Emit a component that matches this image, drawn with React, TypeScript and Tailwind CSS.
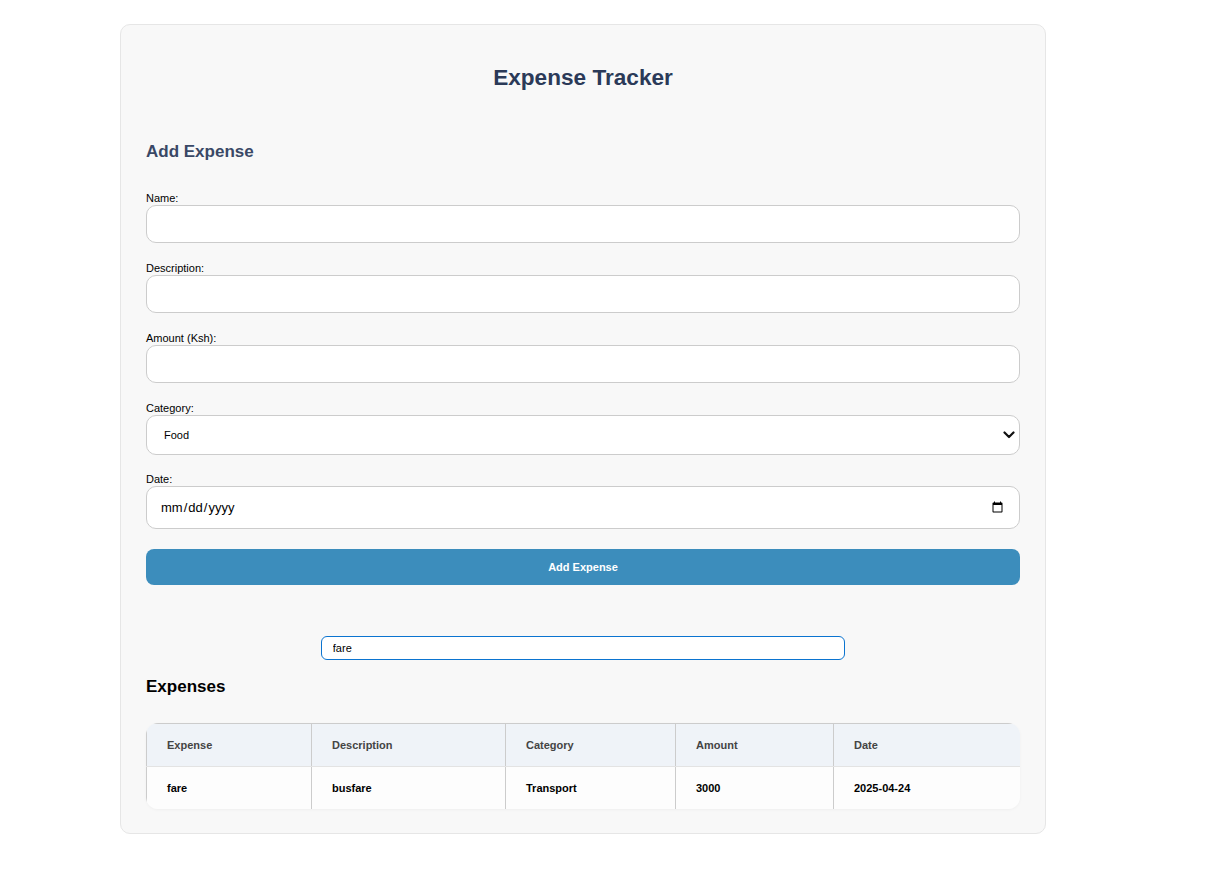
import { useState } from "react";

const expenses = [
  { name: "fare", description: "busfare", category: "Transport", amount: 3000, date: "2025-04-24" },
];

export default function App() {
  const [search, setSearch] = useState("fare");

  const inputClass =
    "block w-full h-[38px] rounded-[10px] border border-[#cccccc] bg-white px-3 text-[13px] outline-none";

  return (
    <div className="min-h-screen bg-white font-['Liberation_Sans',Arial,sans-serif] text-black pt-6 pb-10">
      <div className="ml-[120px] w-[926px] rounded-[10px] border border-[#e6e6e6] bg-[#f8f8f8] p-[25px] pb-[24px]">
        <h1 className="mt-[15px] text-center text-[22.6px] leading-[26px] font-bold text-[#2b3a58]">
          Expense Tracker
        </h1>

        <h2 className="mt-[51px] text-[17px] leading-[20px] font-bold text-[#3a4866]">Add Expense</h2>

        <form className="mt-[30px]" onSubmit={(e) => e.preventDefault()}>
          <label className="block text-[11px] leading-[13px]">Name:</label>
          <input type="text" className={inputClass} />

          <label className="mt-[19px] block text-[11px] leading-[13px]">Description:</label>
          <input type="text" className={inputClass} />

          <label className="mt-[19px] block text-[11px] leading-[13px]">Amount (Ksh):</label>
          <input type="number" className={inputClass} />

          <label className="mt-[19px] block text-[11px] leading-[13px]">Category:</label>
          <div className="relative">
            <select className="block w-full h-[40px] appearance-none rounded-[10px] border border-[#cccccc] bg-white pl-[17px] pr-8 text-[11px] outline-none">
              <option>Food</option>
              <option>Transport</option>
              <option>Entertainment</option>
              <option>Other</option>
            </select>
            <svg
              className="pointer-events-none absolute right-[5px] top-1/2 -translate-y-1/2"
              width="12"
              height="8"
              viewBox="0 0 12 8"
              fill="none"
            >
              <path d="M1.5 1.5 L6 6 L10.5 1.5" stroke="#111" strokeWidth="2.2" strokeLinecap="round" strokeLinejoin="round" />
            </svg>
          </div>

          <label className="mt-[18px] block text-[11px] leading-[13px]">Date:</label>
          <input
            type="date"
            className="block w-full h-[43px] rounded-[10px] border border-[#cccccc] bg-white px-[13px] text-[13px] outline-none"
          />

          <button
            type="submit"
            className="mt-[20px] block w-full h-[36px] rounded-[8px] bg-[#3c8dbc] text-[11px] font-bold text-white"
          >
            Add Expense
          </button>
        </form>

        <div className="mt-[51px] flex justify-center">
          <input
            type="text"
            value={search}
            onChange={(e) => setSearch(e.target.value)}
            className="w-[60%] h-[24px] rounded-[6px] border-[1.5px] border-[#0b74d0] bg-white px-[11px] text-[11px] outline-none"
          />
        </div>

        <h2 className="mt-[17px] text-[17px] leading-[20px] font-bold text-black">Expenses</h2>

        <div className="mt-[26px] overflow-hidden rounded-[12px] shadow-[0_1px_3px_rgba(0,0,0,0.04)]">
          <table className="w-full table-fixed border-collapse text-[11px]">
            <colgroup>
              <col className="w-[165px]" />
              <col className="w-[194px]" />
              <col className="w-[170px]" />
              <col className="w-[158px]" />
              <col className="w-[187px]" />
            </colgroup>
            <thead>
              <tr className="bg-[#eff3f8]">
                {["Expense", "Description", "Category", "Amount", "Date"].map((h) => (
                  <th
                    key={h}
                    className="h-[43px] border-x border-t border-b border-x-[#cccccc] border-t-[#cccccc] border-b-[#e3e3e3] pl-[20px] text-left font-bold text-[#444444]"
                  >
                    {h}
                  </th>
                ))}
              </tr>
            </thead>
            <tbody>
              {expenses
                .filter((x) => x.name.includes(search) || x.description.includes(search))
                .map((x) => (
                  <tr key={x.name} className="bg-[#fdfdfd]">
                    <td className="h-[42px] border-x border-[#cccccc] pl-[20px] font-bold">{x.name}</td>
                    <td className="border-x border-[#cccccc] pl-[20px] font-bold">{x.description}</td>
                    <td className="border-x border-[#cccccc] pl-[20px] font-bold">{x.category}</td>
                    <td className="border-x border-[#cccccc] pl-[20px] font-bold">{x.amount}</td>
                    <td className="border-x border-[#cccccc] pl-[20px] font-bold">{x.date}</td>
                  </tr>
                ))}
            </tbody>
          </table>
        </div>
      </div>
    </div>
  );
}
